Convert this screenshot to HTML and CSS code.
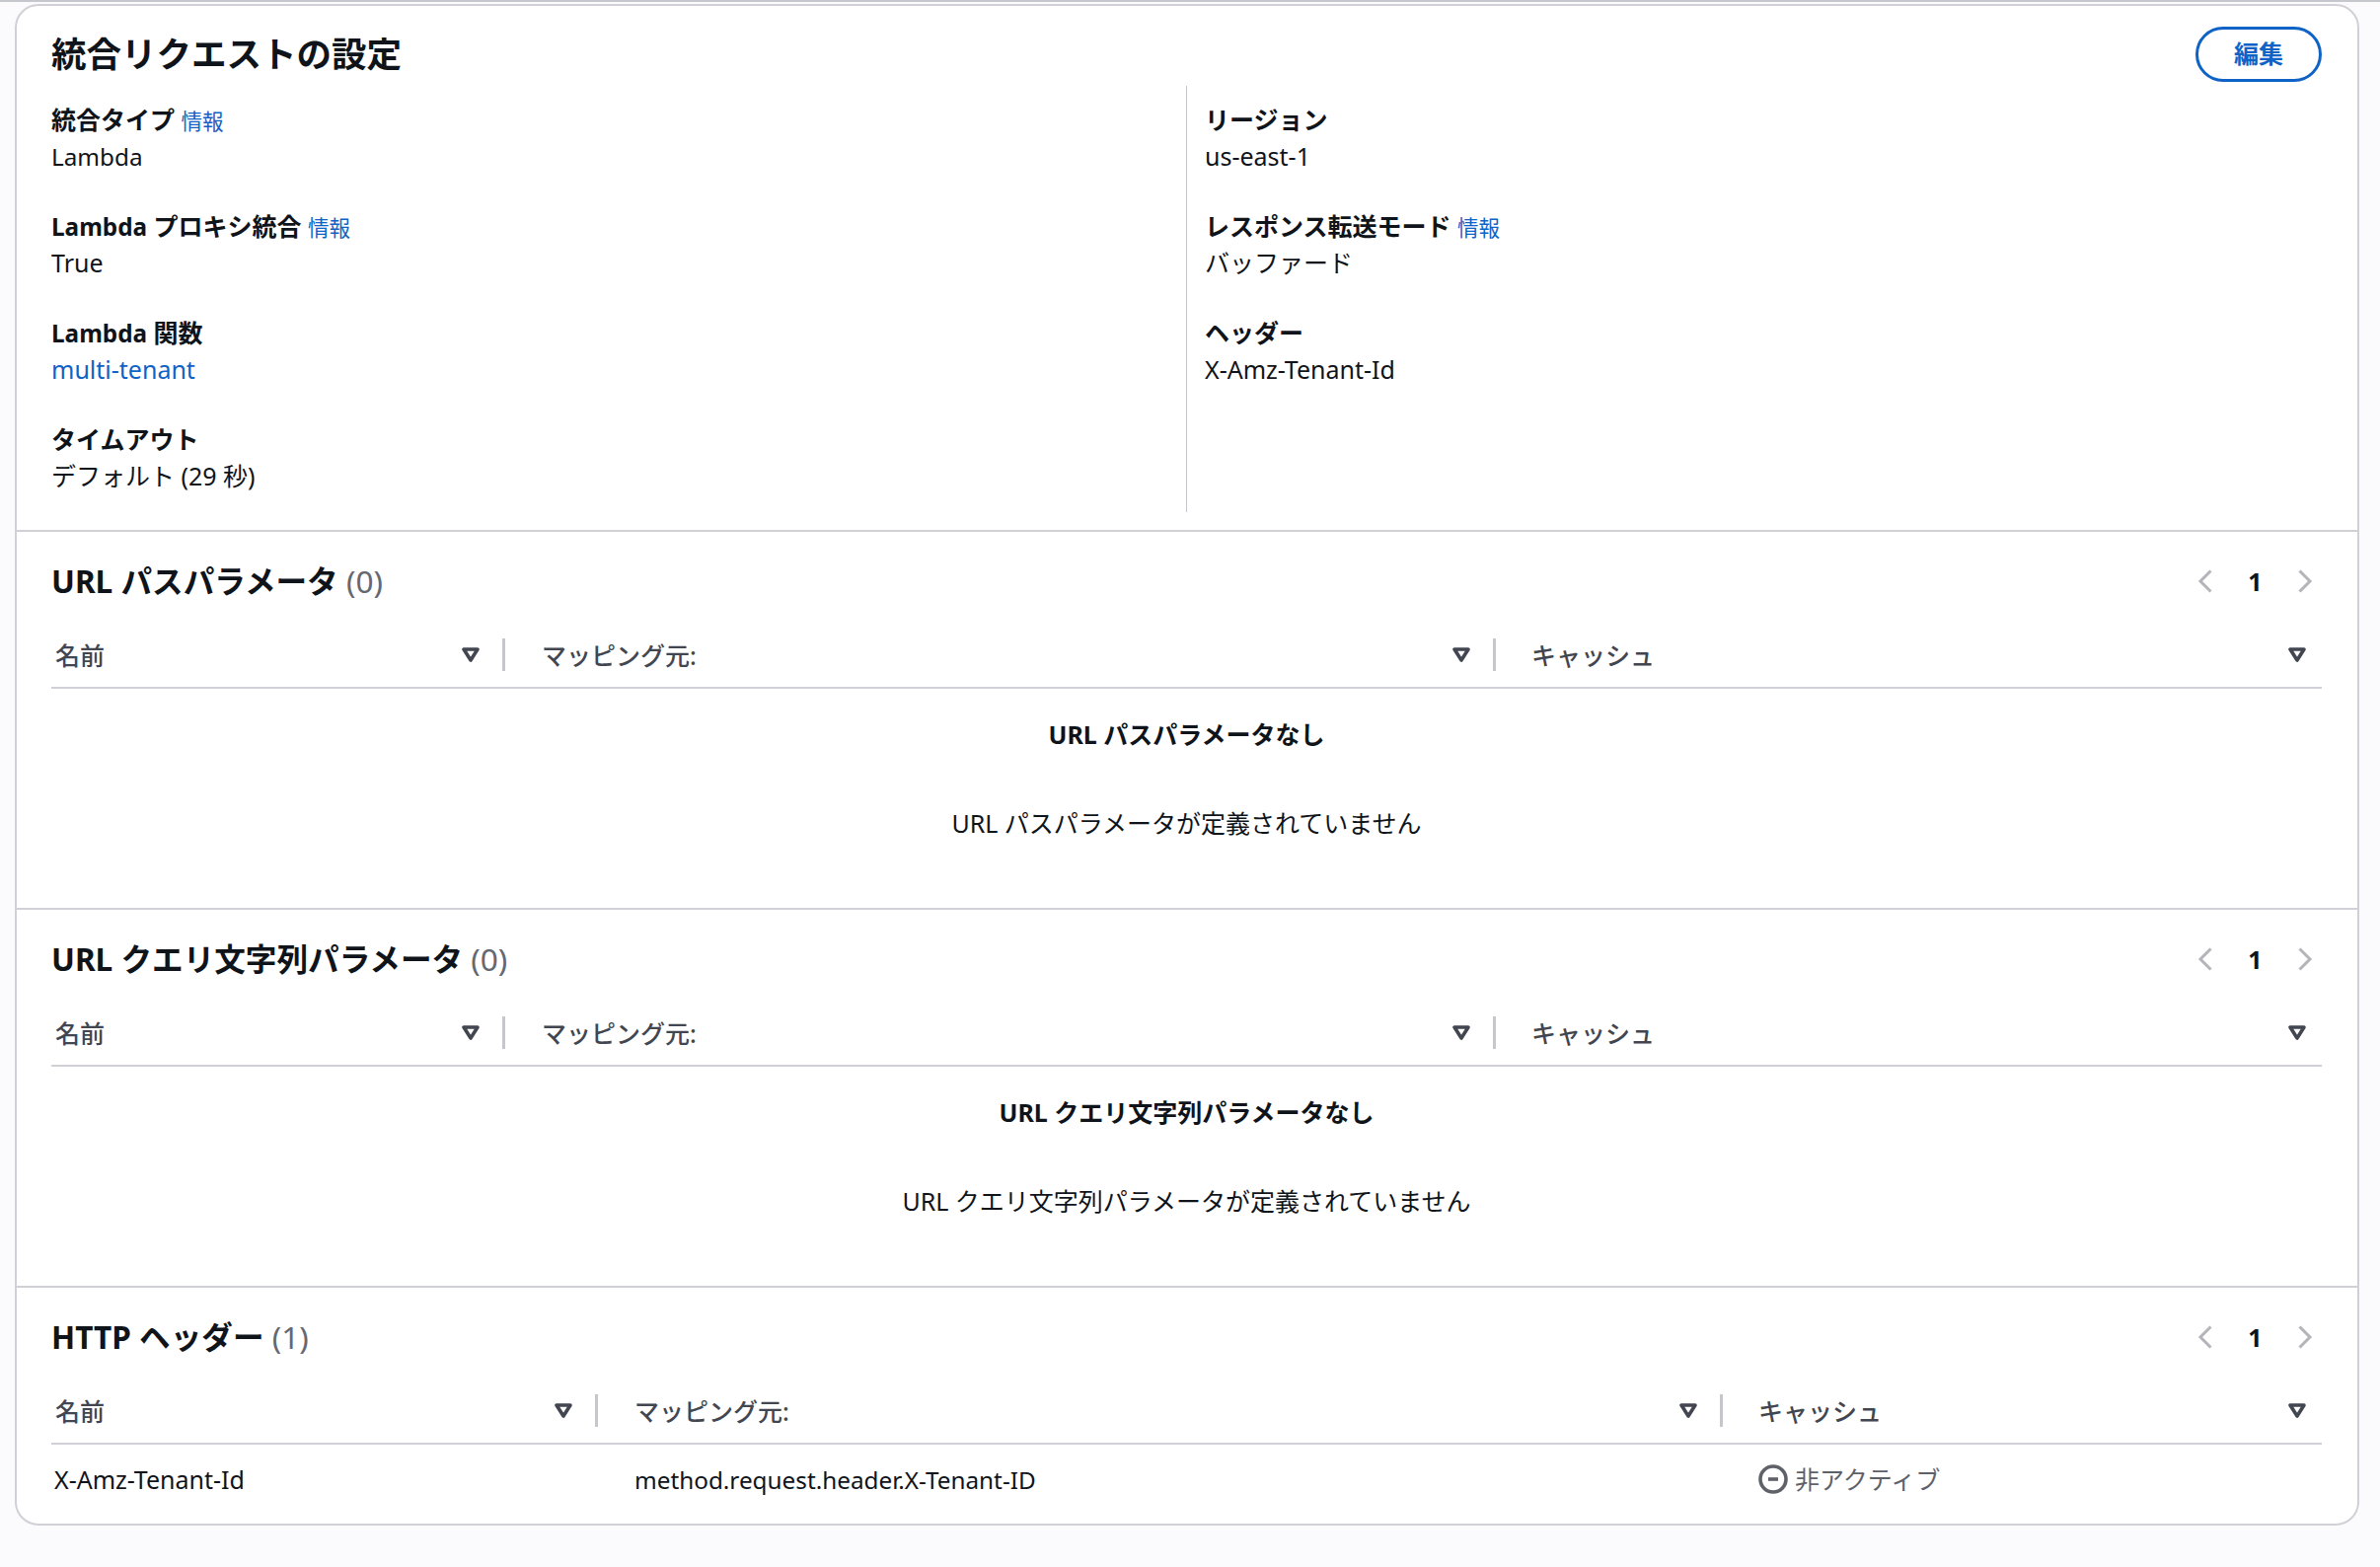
FILE: index.html
```html
<!DOCTYPE html>
<html lang="ja">
<head>
<meta charset="utf-8">
<title>統合リクエストの設定</title>
<link rel="stylesheet" href="styles.css">
</head>
<body>
<svg class="defs" width="0" height="0" aria-hidden="true">
  <symbol id="sort" viewBox="0 0 18 15"><path d="M2 2h14L9 13z" fill="none" stroke="currentColor" stroke-width="3.6" stroke-linejoin="round"/></symbol>
  <symbol id="prev" viewBox="0 0 16 24"><path d="M13.5 1.5 3 12l10.5 10.5" fill="none" stroke="currentColor" stroke-width="3"/></symbol>
  <symbol id="next" viewBox="0 0 16 24"><path d="M2.5 1.5 13 12 2.5 22.5" fill="none" stroke="currentColor" stroke-width="3"/></symbol>
</svg>
<main class="card">
  <section class="summary">
    <header class="summary-head">
      <h2 class="title">統合リクエストの設定</h2>
      <button class="btn">編集</button>
    </header>
    <div class="columns">
      <div class="col">
        <div class="field"><div class="label">統合タイプ <a class="info">情報</a></div><div class="value"><span class="lat">Lambda</span></div></div>
        <div class="field"><div class="label"><span class="lat">Lambda</span> プロキシ統合 <a class="info">情報</a></div><div class="value">True</div></div>
        <div class="field"><div class="label"><span class="lat">Lambda</span> 関数</div><div class="value"><a class="link">multi-tenant</a></div></div>
        <div class="field"><div class="label">タイムアウト</div><div class="value">デフォルト (29 秒)</div></div>
      </div>
      <div class="col col-right">
        <div class="field"><div class="label">リージョン</div><div class="value">us-east-1</div></div>
        <div class="field"><div class="label">レスポンス転送モード <a class="info">情報</a></div><div class="value">バッファード</div></div>
        <div class="field"><div class="label">ヘッダー</div><div class="value">X-Amz-Tenant-Id</div></div>
      </div>
    </div>
  </section>

  <section class="tsec">
    <header class="tsec-head">
      <h3 class="subtitle">URL パスパラメータ <span class="count">(0)</span></h3>
      <div class="pager"><svg class="chev"><use href="#prev"/></svg><span class="page">1</span><svg class="chev"><use href="#next"/></svg></div>
    </header>
    <div class="thead cols-a">
      <div class="th th-first"><span>名前</span><svg class="sort"><use href="#sort"/></svg><i class="sep"></i></div>
      <div class="th"><span>マッピング元:</span><svg class="sort"><use href="#sort"/></svg><i class="sep"></i></div>
      <div class="th th-last"><span>キャッシュ</span><svg class="sort"><use href="#sort"/></svg></div>
    </div>
    <div class="empty">
      <div class="empty-title">URL パスパラメータなし</div>
      <div class="empty-text">URL パスパラメータが定義されていません</div>
    </div>
  </section>

  <section class="tsec">
    <header class="tsec-head">
      <h3 class="subtitle">URL クエリ文字列パラメータ <span class="count">(0)</span></h3>
      <div class="pager"><svg class="chev"><use href="#prev"/></svg><span class="page">1</span><svg class="chev"><use href="#next"/></svg></div>
    </header>
    <div class="thead cols-a">
      <div class="th th-first"><span>名前</span><svg class="sort"><use href="#sort"/></svg><i class="sep"></i></div>
      <div class="th"><span>マッピング元:</span><svg class="sort"><use href="#sort"/></svg><i class="sep"></i></div>
      <div class="th th-last"><span>キャッシュ</span><svg class="sort"><use href="#sort"/></svg></div>
    </div>
    <div class="empty">
      <div class="empty-title">URL クエリ文字列パラメータなし</div>
      <div class="empty-text">URL クエリ文字列パラメータが定義されていません</div>
    </div>
  </section>

  <section class="tsec tsec-last">
    <header class="tsec-head">
      <h3 class="subtitle">HTTP ヘッダー <span class="count">(1)</span></h3>
      <div class="pager"><svg class="chev"><use href="#prev"/></svg><span class="page">1</span><svg class="chev"><use href="#next"/></svg></div>
    </header>
    <div class="thead cols-b">
      <div class="th th-first"><span>名前</span><svg class="sort"><use href="#sort"/></svg><i class="sep"></i></div>
      <div class="th"><span>マッピング元:</span><svg class="sort"><use href="#sort"/></svg><i class="sep"></i></div>
      <div class="th th-last"><span>キャッシュ</span><svg class="sort"><use href="#sort"/></svg></div>
    </div>
    <div class="trow cols-b">
      <div class="td td-first">X-Amz-Tenant-Id</div>
      <div class="td"><span class="lat">method.request.header.X-Tenant-ID</span></div>
      <div class="td td-status">
        <svg class="status-icon" viewBox="0 0 30 30"><circle cx="15" cy="15" r="13" fill="none" stroke="currentColor" stroke-width="3.6"/><path d="M10 15h10" stroke="currentColor" stroke-width="3.6"/></svg>
        <span>非アクティブ</span>
      </div>
    </div>
  </section>
</main>
</body>
</html>
```
FILE: styles.css
```css
* { box-sizing: border-box; }
html, body { margin: 0; height: 100%; }
body {
  background: #fbfbfd;
  border-top: 2px solid #c6c6cd;
  padding: 2px 21px 0 15px;
  font-family: "Noto Sans", "Noto Sans CJK JP", sans-serif;
  font-size: 25px;
  line-height: 36px;
  color: #0f141a;
  overflow: hidden;
}
.defs { position: absolute; }
.card {
  background: #fff;
  border: 2px solid #d0d0d6;
  border-radius: 24px;
  height: 1542px;
}
h2, h3 { margin: 0; }
.lat { font-size: 24.3px; }

.summary { height: 533px; border-bottom: 2px solid #d0d0d6; padding: 21px 36px 0 35px; }
.summary-head { display: flex; justify-content: space-between; align-items: center; height: 55px; }
.title { font-size: 35.5px; line-height: 55px; font-weight: 700; margin-top: -1px; }
.btn {
  width: 128px; height: 56px; padding: 0 0 2px;
  border: 3px solid #0f62c6; border-radius: 28px; background: #fff;
  color: #0f62c6; font: 700 25px/36px "Noto Sans", "Noto Sans CJK JP", sans-serif;
}
.columns { display: grid; grid-template-columns: 1150px 1fr; margin-top: 5px; height: 432px; }
.col { padding-top: 16px; display: flex; flex-direction: column; gap: 35px; }
.col-right { border-left: 1px solid #c6c6cd; padding-left: 18px; }
.label { font-weight: 700; height: 36px; }
.value { height: 36px; margin-top: 1px; }
.info { font-size: 21.5px; font-weight: 400; color: #0f62c6; }
.link { color: #0f62c6; }

.tsec { height: 383px; border-bottom: 2px solid #d0d0d6; padding: 29px 36px 0 35px; }
.tsec-last { height: auto; border-bottom: 0; }
.tsec-head { display: flex; justify-content: space-between; align-items: center; height: 42px; }
.subtitle { font-size: 31.6px; line-height: 42px; font-weight: 700; }
.count { font-weight: 400; color: #656871; }
.pager { display: flex; align-items: center; gap: 32.5px; margin-right: 9px; color: #b4b4bb; }
.chev { width: 16px; height: 24px; }
.page { color: #0f141a; font-weight: 700; font-size: 25px; width: 20px; text-align: center; }

.thead { display: grid; margin-top: 21px; height: 67px; border-bottom: 2px solid #d0d0d6; align-items: center; }
.cols-a { grid-template-columns: 460px 1004px 1fr; }
.cols-b { grid-template-columns: 554px 1140px 1fr; }
.th { display: flex; align-items: center; justify-content: space-between; font-weight: 500; color: #424650; padding-left: 37px; }
.th-first { padding-left: 4px; }
.th-last { padding-left: 36px; padding-right: 16px; }
.sort { width: 18px; height: 15px; margin-left: auto; color: #424650; }
.sep { width: 3px; height: 33px; background: #c6c6cd; margin-left: 23px; }

.empty { text-align: center; padding-top: 28px; }
.empty-title { font-weight: 700; }
.empty-text { margin-top: 54px; }

.trow { display: grid; align-items: center; height: 70px; }
.td { padding-left: 37px; }
.td-first { padding-left: 3px; }
.td-status { display: flex; align-items: center; gap: 7px; padding-left: 36px; color: #5f6169; }
.status-icon { width: 30px; height: 30px; }
```
